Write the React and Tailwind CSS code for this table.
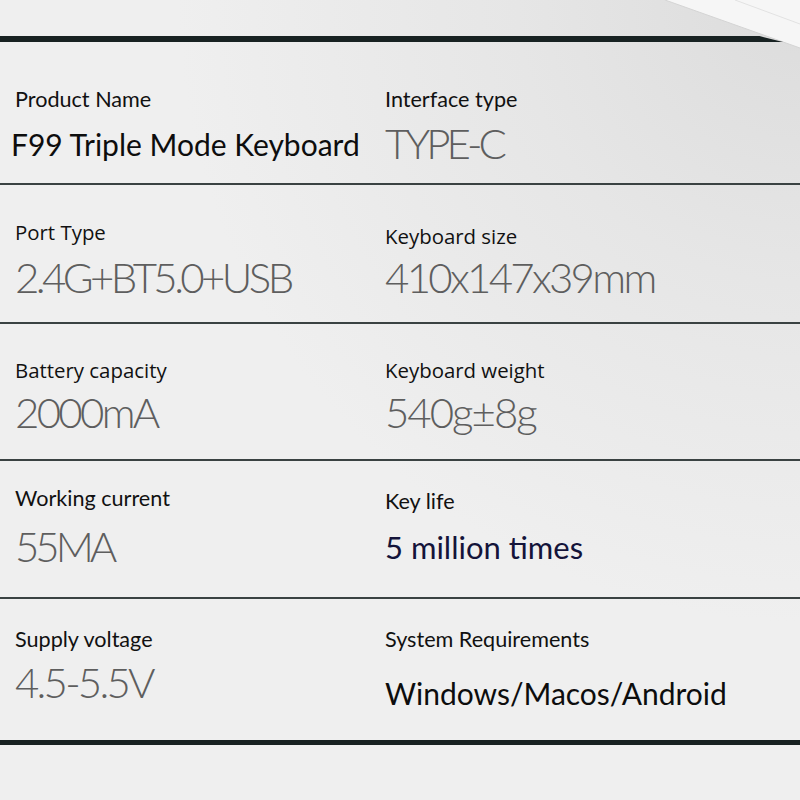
import React from "react";

const rows = [
  {
    h: "h-[143px]",
    pt: "pt-[45px]",
    items: [
      { label: "Product Name", value: "F99 Triple Mode Keyboard", dark: true, lx: "", vx: "-ml-[4px]", vm: "mt-[13px]" },
      { label: "Interface type", value: "TYPE-C", tr: "tracking-[-4px]", vm: "mt-[9px]" },
    ],
  },
  {
    h: "h-[139px]",
    pt: "pt-[35px]",
    items: [
      { label: "Port Type", value: "2.4G+BT5.0+USB", wide: true, tr: "tracking-[-3.6px]", vm: "mt-[10px]" },
      { label: "Keyboard size", value: "410x147x39mm", wide: true, lm: "mt-[4px]", tr: "tracking-[-2.7px]", vm: "mt-[6px]" },
    ],
  },
  {
    h: "h-[137px]",
    pt: "pt-[34px]",
    items: [
      { label: "Battery capacity", value: "2000mA", wide: true, tr: "tracking-[-2.7px]", vm: "mt-[7px]" },
      { label: "Keyboard weight", value: "540g±8g", wide: true, tr: "tracking-[-2px]", vm: "mt-[7px]" },
    ],
  },
  {
    h: "h-[138px]",
    pt: "pt-[25px]",
    items: [
      { label: "Working current", value: "55MA", tr: "tracking-[-4px]", vm: "mt-[13px]" },
      { label: "Key life", value: "5 million times", dark: true, navy: true, lm: "mt-[3px]", vm: "mt-[14px]" },
    ],
  },
  {
    h: "h-[141px]",
    pt: "pt-[28px]",
    items: [
      { label: "Supply voltage", value: "4.5-5.5V", tr: "tracking-[-2.8px]", vm: "mt-[8px]" },
      { label: "System Requirements", value: "Windows/Macos/Android", dark: true, vm: "mt-[22px]" },
    ],
  },
];

function Cell({ item }) {
  const labelCls = item.wide
    ? "text-[20.4px] leading-[24px] text-[#111] [font-family:'Open_Sans',sans-serif]"
    : "text-[21.6px] leading-[24px] text-[#111] [font-family:'Lato',sans-serif]";
  return (
    <div className="flex flex-col">
      <div className={labelCls + " " + (item.lm || "")}>{item.label}</div>
      {item.dark ? (
        <div
          className={
            "leading-[40px] [font-family:'Lato',sans-serif] " +
            (item.navy ? "text-[31px] text-[#14143a] " : "text-[30px] text-[#0d0d0d] ") +
            (item.vm || "") +
            " " +
            (item.vx || "")
          }
        >
          {item.value}
        </div>
      ) : (
        <div
          className={
            "text-[42px] leading-[46px] font-light text-[#5e5e5e] [font-family:'Lato',sans-serif] " +
            (item.tr || "") +
            " " +
            (item.vm || "")
          }
        >
          {item.value}
        </div>
      )}
    </div>
  );
}

export default function App() {
  return (
    <div className="relative w-[800px] h-[800px] overflow-hidden bg-[#efefef]">
      <div className="absolute inset-0 bg-[radial-gradient(ellipse_at_top_right,#dcdcdc_0%,#e6e6e6_25%,rgba(239,239,239,0)_55%)]" />
      <svg className="absolute right-0 top-0" width="160" height="60" viewBox="0 0 160 60">
        <polygon points="25,0 160,0 160,48" fill="#f6f6f6" />
        <line x1="25" y1="0" x2="160" y2="48" stroke="#d4d4d4" strokeWidth="1" />
        <line x1="95" y1="0" x2="160" y2="24" stroke="#e2e2e2" strokeWidth="1" />
      </svg>
      <div className="relative pt-[36px]">
        <div className="h-[6px] mr-[17px] bg-[#182222] [clip-path:polygon(0_0,97%_0,100%_100%,0_100%)]" />
        {rows.map((row, i) => (
          <div
            key={i}
            className={
              row.h +
              " " +
              row.pt +
              " grid grid-cols-[370px_1fr] pl-[15px] " +
              (i < rows.length - 1 ? "border-b-2 border-[#3a4242]" : "")
            }
          >
            <Cell item={row.items[0]} />
            <Cell item={row.items[1]} />
          </div>
        ))}
        <div className="h-[5px] bg-[#182222]" />
      </div>
    </div>
  );
}
